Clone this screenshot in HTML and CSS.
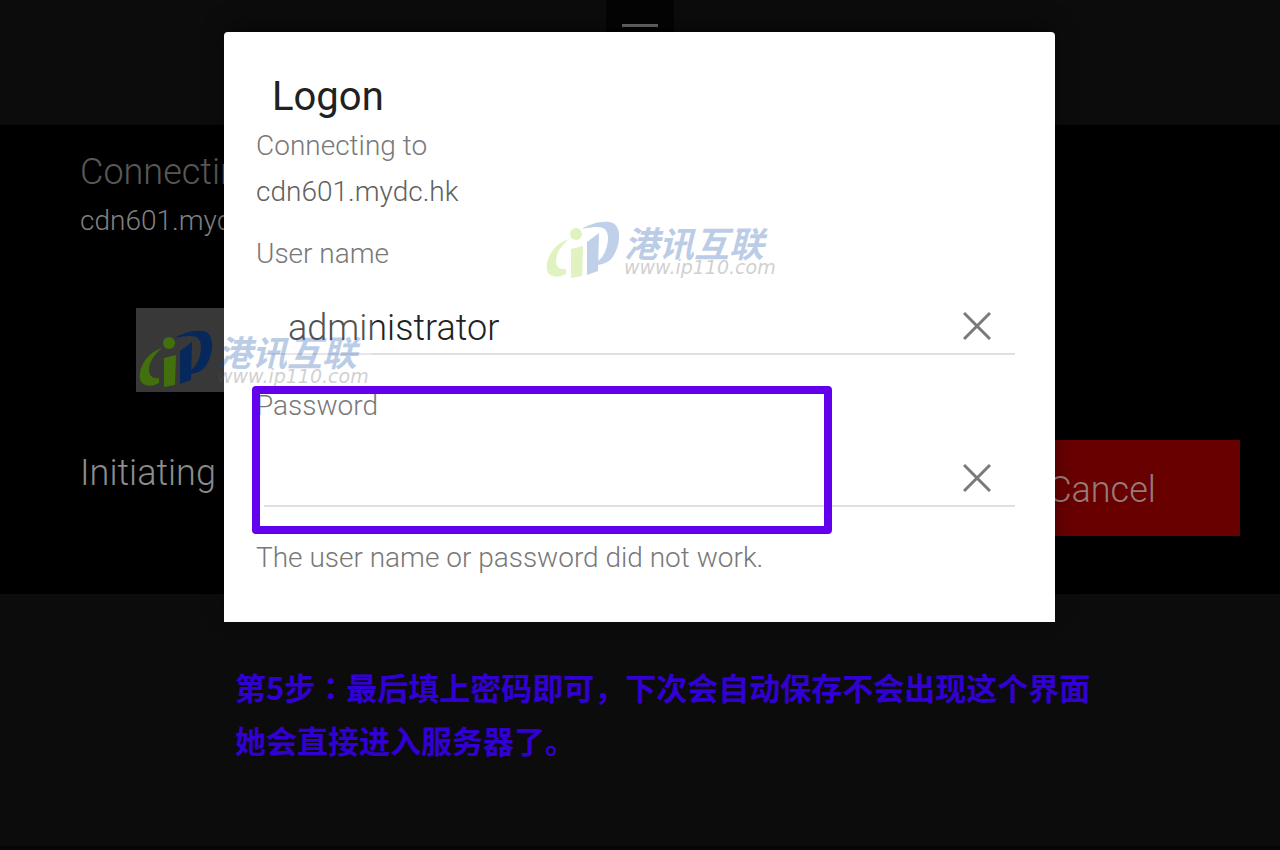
FILE: index.html
```html
<!DOCTYPE html>
<html lang="en">
<head>
<meta charset="utf-8">
<title>Logon</title>
<link rel="stylesheet" href="styles.css">
</head>
<body>
<svg class="defs" aria-hidden="true">
  <symbol id="mark" viewBox="0 0 74 58">
    <g class="mark-green">
      <circle cx="30" cy="13" r="6"/>
      <path d="M25 28L37 25L36 55L25 57Z"/>
      <path d="M23 18C7 23-1 39 1 49C3 57 13 57 20 53L20 48C14 49 10 46 10 40C10 32 16 24 23 18Z"/>
    </g>
    <g class="mark-blue">
      <path d="M36 8C45 2 59-1 67 2C76 7 74 24 68 34C64 41 58 43 52 44L52 40C58 36 62 26 62 17C62 9 58 6 51 6C45 6 40 7 36 8Z"/>
      <path d="M41 21L53 12L52 50L41 54Z"/>
    </g>
  </symbol>
</svg>
<main class="screen">
  <header class="topbar"><span class="handle"></span></header>
  <section class="session">
    <h2 class="session-title">Connecting</h2>
    <p class="session-host">cdn601.mydc.hk</p>
    <div class="session-row">
      <p class="session-status">Initiating</p>
      <button class="cancel" type="button">Cancel</button>
    </div>
  </section>
  <footer class="bottom"></footer>

  <form class="dialog">
    <h1 class="dialog-title">Logon</h1>
    <p class="line">Connecting to</p>
    <p class="line host">cdn601.mydc.hk</p>
    <label class="line label" for="user">User name</label>
    <div class="field">
      <input id="user" type="text" value="administrator">
      <button class="clear" type="button" aria-label="Clear user name"><svg viewBox="0 0 28 28"><path d="M1 1L27 27M27 1L1 27"/></svg></button>
    </div>
    <label class="line label" for="pass">Password</label>
    <div class="field">
      <input id="pass" type="password">
      <button class="clear" type="button" aria-label="Clear password"><svg viewBox="0 0 28 28"><path d="M1 1L27 27M27 1L1 27"/></svg></button>
    </div>
    <p class="line label">The user name or password did not work.</p>
  </form>

  <div class="brand brand-main">
    <svg class="mark"><use href="#mark"/></svg>
    <div class="brand-text"><span class="brand-name">港讯互联</span><span class="brand-url">www.ip110.com</span></div>
  </div>
  <div class="brand brand-boxed">
    <svg class="mark"><use href="#mark"/></svg>
    <div class="brand-text"><span class="brand-name">港讯互联</span><span class="brand-url">www.ip110.com</span></div>
  </div>
  <div class="highlight"></div>
  <p class="note">第5步<span class="colon">：</span>最后填上密码即可，下次会自动保存不会出现这个界面<br>她会直接进入服务器了。</p>
</main>
</body>
</html>
```
FILE: styles.css
```css
* { box-sizing: border-box; }
body { margin: 0; background: #0c0c0c; font-family: Roboto, "Liberation Sans", sans-serif; font-weight: 300; }
h1, h2, p { margin: 0; font-weight: 300; }
button { border: 0; padding: 0; font: inherit; }
.defs { position: absolute; width: 0; height: 0; }
.screen { position: relative; min-height: 100vh; display: flex; flex-direction: column; overflow: hidden; }
.topbar { height: 125px; display: flex; justify-content: center; align-items: flex-start; }
.handle { width: 68px; height: 32px; background: #040404; display: flex; justify-content: center; align-items: flex-end; padding-bottom: 5px; }
.handle::after { content: ""; width: 36px; height: 3px; background: #707070; }
.session { background: #000; padding: 24px 40px 58px 80px; }
.session-title { font-size: 36px; line-height: 46px; color: #585858; }
.session-host { font-size: 28px; line-height: 52px; color: #808080; }
.session-row { display: flex; justify-content: space-between; align-items: flex-start; margin-top: 193px; }
.session-status { font-size: 36px; line-height: 66px; color: #8c8c8c; }
.cancel { width: 276px; height: 96px; background: #680000; color: #957c7c; font-size: 36px; padding-top: 4px; }
.bottom { flex: 1; border-bottom: 4px solid #060606; }
.dialog { position: absolute; top: 32px; left: 224px; right: 225px; background: #fff; border-radius: 4px 4px 0 0; padding: 40px 40px 40px 32px; box-shadow: 0 -8px 20px -4px rgba(0, 0, 0, .5); }
.dialog-title { font-size: 40px; line-height: 50px; font-weight: 400; padding-left: 16px; color: #212121; }
.line { display: block; font-size: 28px; line-height: 48px; color: #787878; }
.host { line-height: 44px; color: #606060; }
.label { padding-top: 16px; }
.field { display: flex; height: 72px; margin: 5px 0 11px 8px; border-bottom: 2px solid #e0e0e0; }
.field input { flex: 1; min-width: 0; border: 0; outline: 0; background: none; padding: 20px 0 0 24px; font: inherit; font-size: 36px; color: #212121; }
.clear { width: 76px; padding-top: 20px; background: none; }
.clear svg { width: 28px; height: 28px; fill: none; stroke: #7a7a7a; stroke-width: 3; }
.brand { --green: #84cc08; --blue: #0848a8; position: absolute; display: flex; gap: 4px; pointer-events: none; }
.brand-main { top: 221px; left: 546px; }
.brand-boxed { top: 308px; left: 136px; padding: 22px 3px 4px; background: rgba(255, 255, 255, .22); }
.mark { width: 74px; height: 58px; flex: none; overflow: visible; opacity: .25; }
.brand-boxed .mark { --green: #42700c; --blue: #06285c; opacity: 1; }
.mark-green { fill: var(--green); }
.mark-blue { fill: var(--blue); }
.brand-text { display: flex; flex-direction: column; gap: 4px; padding-top: 6px; white-space: nowrap; opacity: .27; }
.brand-name { font: italic 700 35px/30px "Noto Sans CJK SC", sans-serif; color: #0848a8; }
.brand-url { font: italic 400 19px/12px "DejaVu Sans", sans-serif; color: #555; }
.highlight { position: absolute; top: 386px; left: 252px; width: 580px; height: 148px; border: 8px solid #6200ee; border-radius: 4px; }
.note { position: absolute; top: 660px; left: 235px; font: 700 31px/53px "Noto Sans CJK SC", sans-serif; color: #3200d2; white-space: nowrap; }
.colon { font-family: "Noto Sans CJK TC", sans-serif; }
```
